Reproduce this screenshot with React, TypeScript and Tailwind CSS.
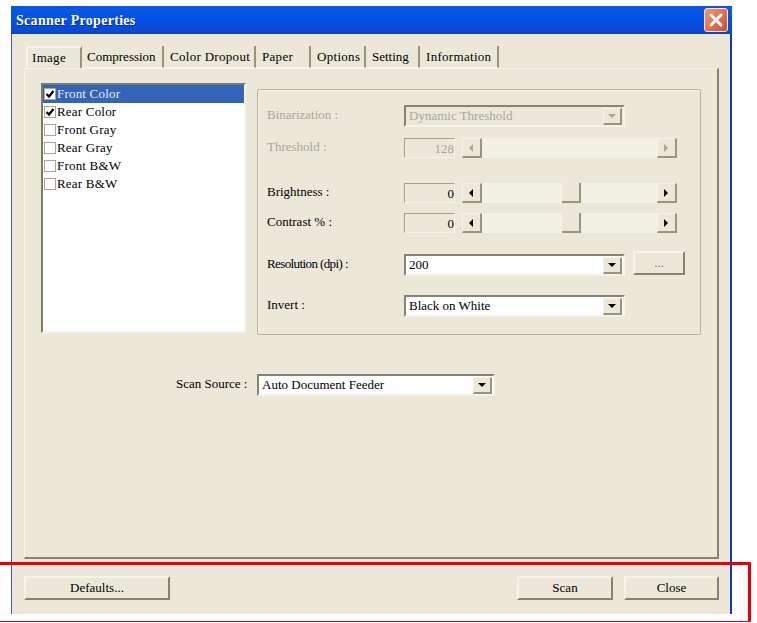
import { X } from "lucide-react"

const tabs = [
  { label: "Image", width: "w-[56px] pl-[4px] tracking-[0.3px]" },
  { label: "Compression", width: "w-[82px] pl-[5px]" },
  { label: "Color Dropout", width: "w-[92px] pl-[6px] tracking-[0.3px]" },
  { label: "Paper", width: "w-[55px] pl-[6px] tracking-[0.3px]" },
  { label: "Options", width: "w-[55px] pl-[6px] tracking-[0.3px]" },
  { label: "Setting", width: "w-[54px] pl-[6px]" },
  { label: "Information", width: "w-[79px] pl-[6px] tracking-[0.3px]" },
]

const sides = [
  { label: "Front Color", checked: true },
  { label: "Rear Color", checked: true },
  { label: "Front Gray", checked: false },
  { label: "Rear Gray", checked: false },
  { label: "Front B&W", checked: false },
  { label: "Rear B&W", checked: false },
]

function Arrow({ dir, disabled }: { dir: "left" | "right" | "down"; disabled?: boolean }) {
  const points = dir === "left" ? "6,1 6,9 2,5" : dir === "right" ? "2,1 2,9 6,5" : "1,3 9,3 5,7"
  return (
    <svg width="10" height="10" viewBox="0 0 10 10">
      <polygon points={points} fill={disabled ? "#a8a698" : "#000000"} />
    </svg>
  )
}

function ArrowButton({ dir, disabled, className }: { dir: "left" | "right" | "down"; disabled?: boolean; className: string }) {
  return (
    <div className={`flex shrink-0 items-center justify-center border-t border-l border-t-[#f4f2e8] border-l-[#f4f2e8] border-r-2 border-b-2 border-r-[#98957f] border-b-[#98957f] bg-[#ebe8da] ${className}`}>
      <Arrow dir={dir} disabled={disabled} />
    </div>
  )
}

function Combo({ value, width, disabled }: { value: string; width: string; disabled?: boolean }) {
  return (
    <div className={`flex h-[22px] items-center border-2 border-t-[#86836f] border-l-[#86836f] border-r-[#f6f4ea] border-b-[#f6f4ea] pr-px ${width} ${disabled ? "bg-[#ebe8da] text-[#a8a698]" : "bg-white text-black"}`}>
      <span className="flex-1 truncate pb-[2px] pl-[3px] leading-none">{value}</span>
      <ArrowButton dir="down" disabled={disabled} className="h-[17px] w-[19px]" />
    </div>
  )
}

function SliderRow({ value, disabled }: { value: string; disabled?: boolean }) {
  return (
    <div className={`flex h-[20px] items-center ${disabled ? "text-[#a8a698]" : "text-black"}`}>
      <div className="flex h-full w-[51px] items-center justify-end border border-t-[#a3a08e] border-l-[#a3a08e] border-r-[#f6f4ea] border-b-[#f6f4ea] leading-none">
        {value}
      </div>
      <div className="ml-[7px] flex h-full w-[215px] items-stretch bg-[#f3f1e6]">
        <ArrowButton dir="left" disabled={disabled} className="w-[20px]" />
        <div className="flex-1">
          {disabled ? null : <div className="ml-[80px] h-full w-[19px] border-r-2 border-b-2 border-r-[#98957f] border-b-[#98957f] bg-[#ebe8da]" />}
        </div>
        <ArrowButton dir="right" disabled={disabled} className="w-[20px]" />
      </div>
    </div>
  )
}

function PushButton({ label, width, height = "h-[24px]", muted }: { label: string; width: string; height?: string; muted?: boolean }) {
  return (
    <div className={`flex items-center justify-center border-t-2 border-l-2 border-t-[#f6f4ea] border-l-[#f6f4ea] border-r-2 border-b-2 border-r-[#86836f] border-b-[#86836f] bg-[#ebe8da] ${width} ${height} ${muted ? "text-[#77756a]" : "text-black"}`}>
      {label}
    </div>
  )
}

function FieldRow({ label, disabled, children, className, labelClass }: { label: string; disabled?: boolean; children: React.ReactNode; className?: string; labelClass?: string }) {
  return (
    <div className={`flex items-center ${className ?? ""}`}>
      <div className={`w-[137px] shrink-0 pb-[2px] leading-[16px] ${disabled ? "text-[#a8a698]" : "text-black"} ${labelClass ?? ""}`}>{label}</div>
      {children}
    </div>
  )
}

export default function App() {
  return (
    <div className="relative h-[623px] w-[757px] overflow-hidden bg-white pt-[6px] pl-[11px] font-['Liberation_Serif',serif] text-[13px] text-black">
      {/* Dialog window */}
      <div className="flex h-[608px] w-[721px] flex-col">
        <div className="flex h-[28px] shrink-0 items-center justify-between bg-gradient-to-b from-[#0a5ae2] via-[#0250e8] to-[#0b48c8] pr-[4px] pl-[5px]">
          <span className="text-[14px] font-bold tracking-[0.3px] text-white [text-shadow:1px_1px_0_#0a2f90]">Scanner Properties</span>
          <div className="flex h-[24px] w-[24px] items-center justify-center rounded-[3px] border border-[#f0e8e0] bg-gradient-to-br from-[#ee9a78] to-[#d04a28]">
            <X size={20} strokeWidth={3.5} color="#ffffff" />
          </div>
        </div>

        <div className="flex flex-1 flex-col border-l border-r-[2px] border-l-[#3a5cb0] border-r-[#1238b8] bg-[#ebe8da] pt-[12px] pl-[12px]">
          {/* Tabs */}
          <div className="flex h-[22px] shrink-0 pl-[2px]">
            {tabs.map((tab, i) => (
              <div
                key={tab.label}
                className={`flex h-full items-center border-r-2 border-r-[#98957f] ${tab.width} ${i === 0 ? "border-t-2 border-l-2 border-t-[#f6f4ea] border-l-[#f6f4ea]" : "border-b border-b-[#f6f4ea]"}`}
              >
                {tab.label}
              </div>
            ))}
          </div>

          {/* Tab page */}
          <div className="h-[491px] w-[695px] shrink-0 border-t border-l border-t-[#f6f4ea] border-l-[#f6f4ea] border-r-2 border-b-2 border-r-[#86836f] border-b-[#86836f] pt-[14px] pl-[16px]">
            <div className="flex items-start">
              <div className="h-[250px] w-[205px] shrink-0 border-2 border-t-[#7c7966] border-l-[#7c7966] border-r-[#f6f4ea] border-b-[#f6f4ea] bg-white">
                {sides.map((side, i) => (
                  <div key={side.label} className={`flex h-[18px] items-center pl-[1px] ${i === 0 ? "bg-[#3464b8] text-[#e8eefa]" : ""}`}>
                    <div className="flex h-[12px] w-[12px] shrink-0 items-center justify-center border border-[#a8a698] bg-white">
                      {side.checked ? (
                        <svg width="10" height="10" viewBox="0 0 10 10">
                          <path d="M1.5 5 L4 7.5 L8.5 2" fill="none" stroke="#000000" strokeWidth="2.2" />
                        </svg>
                      ) : null}
                    </div>
                    <span className="pl-px tracking-[0.2px]">{side.label}</span>
                  </div>
                ))}
              </div>

              {/* Settings group */}
              <div className="mt-[6px] ml-[11px] h-[246px] w-[444px] rounded-[2px] border border-[#b5b29f] pt-[15px] pl-[9px] shadow-[inset_1px_1px_0_#f6f4ea]">
                <FieldRow label="Binarization :" disabled>
                  <Combo value="Dynamic Threshold" width="w-[221px]" disabled />
                </FieldRow>
                <FieldRow label="Threshold :" disabled className="mt-[11px]">
                  <SliderRow value="128" disabled />
                </FieldRow>
                <FieldRow label="Brightness :" className="mt-[25px]">
                  <SliderRow value="0" />
                </FieldRow>
                <FieldRow label="Contrast % :" className="mt-[10px]">
                  <SliderRow value="0" />
                </FieldRow>
                <FieldRow label="Resolution (dpi) :" labelClass="tracking-[-0.6px]" className="mt-[21px]">
                  <Combo value="200" width="w-[221px]" />
                  <div className="mt-[-4px] ml-[8px]">
                    <PushButton label="..." width="w-[52px]" muted />
                  </div>
                </FieldRow>
                <FieldRow label="Invert :" className="mt-[19px]">
                  <Combo value="Black on White" width="w-[221px]" />
                </FieldRow>
              </div>
            </div>

            <div className="mt-[39px] flex items-center pl-[135px]">
              <span className="w-[81px] shrink-0 pb-[2px] leading-[16px]">Scan Source :</span>
              <Combo value="Auto Document Feeder" width="w-[238px]" />
            </div>
          </div>

          {/* Footer buttons */}
          <div className="mt-[17px] flex w-[695px] items-center">
            <PushButton label="Defaults..." width="w-[146px]" />
            <div className="flex-1" />
            <PushButton label="Scan" width="w-[96px]" />
            <div className="w-[11px]" />
            <PushButton label="Close" width="w-[95px]" />
          </div>
        </div>
      </div>

      {/* Red annotation box */}
      <div className="absolute top-[562px] left-[-4px] h-[60px] w-[755px] border-t-[3px] border-r-[3px] border-b-[1px] border-red-600" />
    </div>
  )
}
